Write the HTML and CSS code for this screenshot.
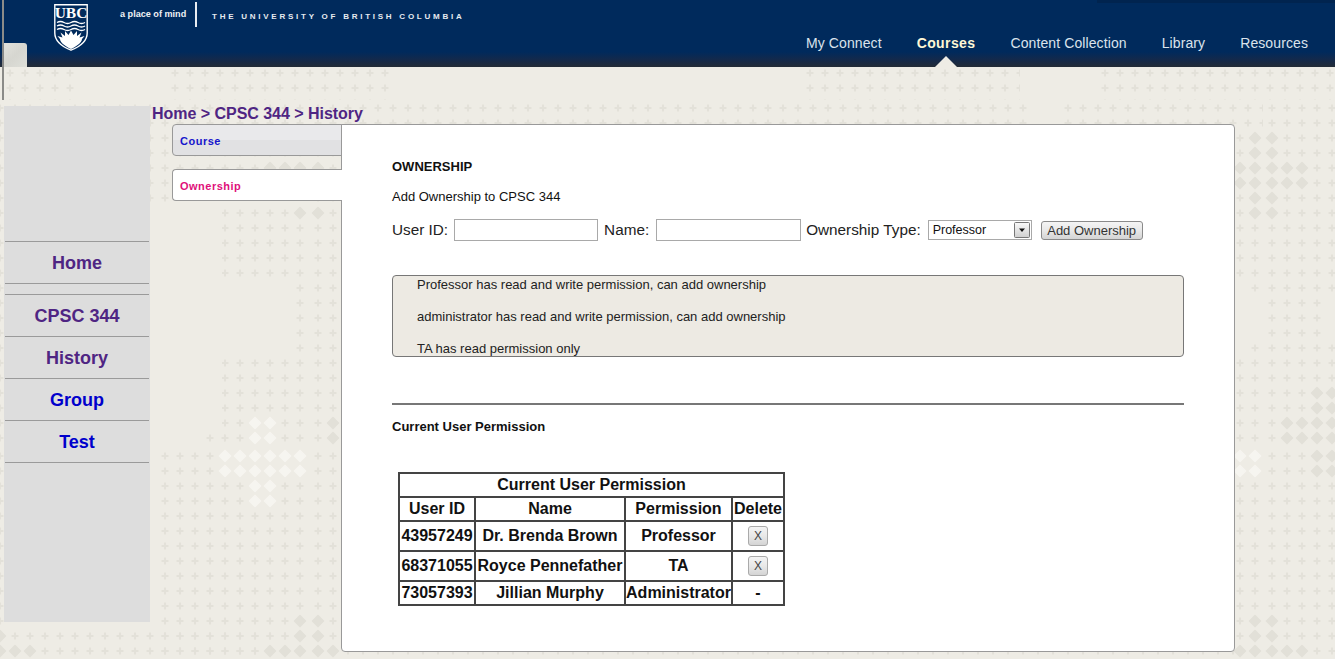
FILE: index.html
```html
<!DOCTYPE html>
<html lang="en">
<head>
<meta charset="utf-8">
<title>Ownership - CPSC 344</title>
<link rel="stylesheet" href="styles.css">
</head>
<body>
<div class="page">
  <header class="header">
    <div class="tab-handle"></div>
    <div class="top-strip"></div>
    <div class="brand">
      <svg class="crest" viewBox="0 0 34 47" width="34" height="47" aria-label="UBC">
        <path d="M.8.8H33.2V29C33.2 37 25 43 17 46.2 9 43 .8 37 .8 29Z" fill="#002a5c" stroke="#fff" stroke-width="1.4"/>
        <text x="17" y="13.8" text-anchor="middle" class="crest-text">UBC</text>
        <path d="M3 18.5q3.500-2 7 0t7 0 7 0 7 0M3 22q3.500-2 7 0t7 0 7 0 7 0M3 25.500q3.500-2 7 0t7 0 7 0 7 0" fill="none" stroke="#fff" stroke-width="1.300"/>
        <path d="M3.500 32 8.500 33.500 6.500 28.500 11 32 11 27 14.500 31 17 26.500 19.500 31 23 27 23 32 27.500 28.500 25.500 33.500 30.500 32 28 35C28 39 21 43 17 45 13 43 6 39 6 35Z" fill="#fff"/>
      </svg>
      <div class="tagline">a place of mind</div>
      <div class="divider"></div>
      <div class="uni-name">THE UNIVERSITY OF BRITISH COLUMBIA</div>
    </div>
    <nav class="topnav">
      <a class="topnav-link">My Connect</a>
      <a class="topnav-link is-active">Courses</a>
      <a class="topnav-link">Content Collection</a>
      <a class="topnav-link">Library</a>
      <a class="topnav-link">Resources</a>
    </nav>
  </header>
  <div class="edge-line"></div>
  <div class="layout">
    <aside class="sidebar">
      <a class="side-item side-home">Home</a>
      <a class="side-item">CPSC 344</a>
      <a class="side-item">History</a>
      <a class="side-item side-blue">Group</a>
      <a class="side-item side-blue">Test</a>
    </aside>
    <main class="main">
      <div class="breadcrumb">Home &gt; CPSC 344 &gt; History</div>
      <div class="workspace">
        <div class="tabs">
          <a class="tab tab-course">Course</a>
          <a class="tab tab-current">Ownership</a>
        </div>
        <section class="panel">
          <h1 class="panel-title">OWNERSHIP</h1>
          <p class="panel-sub">Add Ownership to CPSC 344</p>
          <form class="form-row">
            <label class="field-label" for="uid">User ID:</label>
            <input class="field-input" id="uid" type="text">
            <label class="field-label" for="uname">Name:</label>
            <input class="field-input" id="uname" type="text">
            <label class="field-label" for="otype">Ownership Type:</label>
            <select class="field-select" id="otype">
              <option>Professor</option>
              <option>administrator</option>
              <option>TA</option>
            </select>
            <button class="btn btn-add" type="button">Add Ownership</button>
          </form>
          <div class="info-box">
            <p class="info-line">Professor has read and write permission, can add ownership</p>
            <p class="info-line">administrator has read and write permission, can add ownership</p>
            <p class="info-line">TA has read permission only</p>
          </div>
          <hr class="rule">
          <h2 class="section-title">Current User Permission</h2>
          <table class="perm-table">
            <colgroup>
              <col class="col-id"><col class="col-name"><col class="col-perm"><col class="col-del">
            </colgroup>
            <thead>
              <tr class="row-head"><th colspan="4">Current User Permission</th></tr>
              <tr class="row-head"><th>User ID</th><th>Name</th><th>Permission</th><th>Delete</th></tr>
            </thead>
            <tbody>
              <tr class="row-tall"><td>43957249</td><td>Dr. Brenda Brown</td><td>Professor</td><td><button class="btn btn-x" type="button">X</button></td></tr>
              <tr class="row-tall"><td>68371055</td><td>Royce Pennefather</td><td>TA</td><td><button class="btn btn-x" type="button">X</button></td></tr>
              <tr class="row-head"><td>73057393</td><td>Jillian Murphy</td><td>Administrator</td><td>-</td></tr>
            </tbody>
          </table>
        </section>
      </div>
    </main>
  </div>
</div>
</body>
</html>
```
FILE: styles.css
```css
* { box-sizing: border-box; }
html, body { margin: 0; padding: 0; }
body {
  font-family: "Liberation Sans", Arial, sans-serif;
  color: #111;
  background-color: #eeece5;
  background-repeat: no-repeat;
  background-image: url("data:image/svg+xml,<svg xmlns='http://www.w3.org/2000/svg' width='1335' height='659'><defs><pattern id='c' x='-7' y='-7' width='15' height='15' patternUnits='userSpaceOnUse'><path d='M7 3.500v7M3.500 7h7' stroke='%23e3e1d9' stroke-width='2.200'/></pattern><path id='d' d='M0-5.500 5.500 0 0 5.500-5.500 0Z' stroke-width='1.500' stroke-linejoin='round'/></defs><g fill='url(%23c)'><g transform='translate(10,13)'><rect x='-7' y='52' width='75' height='35'/><rect x='158' y='52' width='227' height='35'/><rect x='1090' y='52' width='240' height='35'/></g><g transform='translate(0,13)'><rect x='805' y='52' width='215' height='35'/></g><g transform='translate(0,3)'><rect x='-8' y='100' width='180' height='105'/><rect x='-8' y='205' width='15' height='240'/><rect x='172' y='100' width='137' height='25'/><rect x='172' y='150' width='137' height='20'/><rect x='222' y='205' width='87' height='70'/><rect x='295' y='280' width='14' height='70'/><rect x='222' y='355' width='87' height='85'/><rect x='205' y='430' width='20' height='10'/></g><g transform='translate(3,3)'><rect x='306' y='100' width='720' height='25'/><rect x='1060' y='100' width='200' height='25'/><rect x='306' y='150' width='32' height='295'/></g><g transform='translate(10,3)'><rect x='1225' y='125' width='28' height='150'/><rect x='1225' y='355' width='28' height='85'/><rect x='1240' y='280' width='13' height='10'/><rect x='1240' y='340' width='13' height='10'/></g><g transform='translate(12,3)'><rect x='1251' y='100' width='84' height='190'/><rect x='1251' y='295' width='60' height='40'/><rect x='1251' y='340' width='84' height='105'/></g><g transform='translate(0,6)'><rect x='-8' y='445' width='15' height='205'/><rect x='160' y='445' width='149' height='205'/><rect x='-8' y='625' width='317' height='30'/></g><g transform='translate(3,6)'><rect x='306' y='445' width='32' height='205'/><rect x='306' y='640' width='930' height='15'/></g><g transform='translate(10,6)'><rect x='1225' y='445' width='28' height='205'/></g><g transform='translate(12,6)'><rect x='1251' y='445' width='84' height='205'/></g></g><g fill='%23e2e0d8' stroke='%23e2e0d8'><use href='%23d' x='270' y='168'/><use href='%23d' x='285' y='168'/><use href='%23d' x='300' y='168'/><use href='%23d' x='318' y='168'/><use href='%23d' x='300' y='213'/><use href='%23d' x='318' y='213'/><use href='%23d' x='333' y='423'/><use href='%23d' x='333' y='438'/><use href='%23d' x='300' y='621'/><use href='%23d' x='318' y='621'/><use href='%23d' x='300' y='636'/><use href='%23d' x='318' y='636'/><use href='%23d' x='270' y='651'/><use href='%23d' x='285' y='651'/><use href='%23d' x='300' y='651'/><use href='%23d' x='318' y='651'/><use href='%23d' x='333' y='651'/><use href='%23d' x='0' y='636'/><use href='%23d' x='0' y='651'/><use href='%23d' x='15' y='651'/><use href='%23d' x='30' y='651'/><use href='%23d' x='1255' y='138'/><use href='%23d' x='1272' y='138'/><use href='%23d' x='1255' y='153'/><use href='%23d' x='1272' y='153'/><use href='%23d' x='1240' y='168'/><use href='%23d' x='1255' y='168'/><use href='%23d' x='1272' y='168'/><use href='%23d' x='1287' y='168'/><use href='%23d' x='1302' y='168'/><use href='%23d' x='1240' y='183'/><use href='%23d' x='1255' y='183'/><use href='%23d' x='1272' y='183'/><use href='%23d' x='1287' y='183'/><use href='%23d' x='1302' y='183'/><use href='%23d' x='1255' y='198'/><use href='%23d' x='1272' y='198'/><use href='%23d' x='1255' y='213'/><use href='%23d' x='1272' y='213'/><use href='%23d' x='1317' y='393'/><use href='%23d' x='1332' y='393'/><use href='%23d' x='1317' y='408'/><use href='%23d' x='1332' y='408'/><use href='%23d' x='1287' y='423'/><use href='%23d' x='1302' y='423'/><use href='%23d' x='1317' y='423'/><use href='%23d' x='1332' y='423'/><use href='%23d' x='1287' y='438'/><use href='%23d' x='1302' y='438'/><use href='%23d' x='1317' y='438'/><use href='%23d' x='1332' y='438'/><use href='%23d' x='1317' y='456'/><use href='%23d' x='1332' y='456'/><use href='%23d' x='1317' y='471'/><use href='%23d' x='1332' y='471'/><use href='%23d' x='1255' y='621'/><use href='%23d' x='1272' y='621'/><use href='%23d' x='1255' y='636'/><use href='%23d' x='1272' y='636'/><use href='%23d' x='1240' y='651'/><use href='%23d' x='1255' y='651'/><use href='%23d' x='1272' y='651'/><use href='%23d' x='1287' y='651'/><use href='%23d' x='1302' y='651'/></g><g fill='%23f6f5f0' stroke='%23f6f5f0'><use href='%23d' x='255' y='423'/><use href='%23d' x='270' y='423'/><use href='%23d' x='255' y='438'/><use href='%23d' x='270' y='438'/><use href='%23d' x='225' y='456'/><use href='%23d' x='240' y='456'/><use href='%23d' x='255' y='456'/><use href='%23d' x='270' y='456'/><use href='%23d' x='285' y='456'/><use href='%23d' x='300' y='456'/><use href='%23d' x='225' y='471'/><use href='%23d' x='240' y='471'/><use href='%23d' x='255' y='471'/><use href='%23d' x='270' y='471'/><use href='%23d' x='285' y='471'/><use href='%23d' x='300' y='471'/><use href='%23d' x='255' y='486'/><use href='%23d' x='270' y='486'/><use href='%23d' x='255' y='501'/><use href='%23d' x='270' y='501'/><use href='%23d' x='1240' y='456'/><use href='%23d' x='1255' y='456'/><use href='%23d' x='1240' y='471'/><use href='%23d' x='1255' y='471'/></g></svg>");
}
.page {
  position: relative;
  height: 659px;
  overflow: hidden;
}

/* Header */
.header {
  position: relative;
  display: flex;
  justify-content: space-between;
  height: 67px;
  background: linear-gradient(to bottom, #002a5c 0, #002a5c 52px, #14294a 60px, #232b36 67px);
}
.tab-handle {
  position: absolute;
  left: 4px;
  top: 43px;
  width: 23px;
  height: 24px;
  background: linear-gradient(135deg, #e2e2dc 0, #d6d6d0 50%, #dedfd9 100%);
  border-radius: 0 3px 0 0;
}
.top-strip {
  position: absolute;
  right: 0;
  top: 0;
  width: 238px;
  height: 3px;
  background: #01244f;
}
.edge-line {
  position: absolute;
  left: 2px;
  top: 0;
  width: 2px;
  height: 100px;
  background: #8b8b88;
}
.brand {
  position: relative;
  height: 67px;
  display: flex;
  align-items: flex-start;
  padding: 4px 0 0 54px;
  color: #fff;
}
.crest { display: block; flex: none; }
.crest-text {
  font-family: "Liberation Serif", serif;
  font-size: 15.500px;
  font-weight: 700;
  fill: #fff;
}
.tagline {
  margin: 4px 0 0 32px;
  width: 75px;
  font-size: 9.100px;
  line-height: 12px;
  font-weight: 700;
  white-space: nowrap;
  color: #f0f2f5;
}
.divider {
  width: 2px;
  height: 25px;
  margin-top: -2px;
  background: #e8ecf1;
}
.uni-name {
  margin: 8px 0 0 15px;
  font-size: 8px;
  line-height: 10px;
  font-weight: 700;
  letter-spacing: 2.750px;
  white-space: nowrap;
  color: #e6eaf0;
}
.topnav {
  display: flex;
  gap: 35px;
  padding: 35px 27px 0 0;
}
.topnav-link {
  position: relative;
  height: 16px;
  font-size: 14px;
  line-height: 16px;
  letter-spacing: 0.1px;
  color: #dbe3ec;
  white-space: nowrap;
}
.topnav-link.is-active {
  font-weight: 700;
  letter-spacing: 0.4px;
  color: #fff8d6;
}
.topnav-link.is-active::after {
  content: "";
  position: absolute;
  left: 50%;
  top: 21px;
  margin-left: -11px;
  border-left: 11px solid transparent;
  border-right: 11px solid transparent;
  border-bottom: 11px solid #eeece5;
}

/* Layout */
.layout {
  display: flex;
  align-items: flex-start;
  padding: 37px 0 0 4px;
}
.sidebar {
  flex: none;
  width: 146px;
  height: 516px;
  margin-top: 2px;
  padding: 135px 1px 0;
  background: #dddddd;
}
.side-item {
  display: block;
  height: 42px;
  border-bottom: 1px solid #9a9a9a;
  text-align: center;
  font-size: 18px;
  line-height: 43px;
  font-weight: 700;
  color: #4f2583;
}
.side-home {
  height: 43px;
  border-top: 1px solid #9a9a9a;
  margin-bottom: 10px;
}
.side-home + .side-item {
  height: 43px;
  border-top: 1px solid #9a9a9a;
}
.side-blue { color: #0000cc; }

.main {
  flex: none;
  margin-left: 2px;
  width: 1085px;
}
.breadcrumb {
  height: 20px;
  font-size: 16px;
  line-height: 18px;
  padding-top: 1px;
  font-weight: 700;
  letter-spacing: -0.03px;
  color: #4f2583;
  white-space: nowrap;
}
.workspace {
  display: flex;
  align-items: flex-start;
  padding-left: 20px;
}
.tabs {
  position: relative;
  z-index: 1;
  flex: none;
  width: 170px;
  margin-right: -1px;
}
.tab {
  display: block;
  height: 32px;
  padding-left: 7px;
  font-size: 11px;
  line-height: 32px;
  font-weight: 700;
  letter-spacing: 0.5px;
  border: 1px solid #999;
  border-right: 0;
  border-radius: 4px 0 0 4px;
}
.tab-course {
  color: #1515cc;
  background: linear-gradient(to bottom, #e9e9eb 0, #e9e9eb 50%, #e1e1e3 50%, #e1e1e3 100%);
  border-right: 1px solid #999;
  margin-bottom: 13px;
}
.tab-current {
  color: #e0107a;
  background: #fff;
}
.panel {
  flex: none;
  width: 894px;
  height: 528px;
  padding: 34px 50px 0;
  background: #fff;
  border: 1px solid #999;
  border-radius: 0 4px 4px 4px;
}
.panel-title {
  margin: 0;
  font-size: 13px;
  line-height: 15px;
  font-weight: 700;
}
.panel-sub {
  margin: 15px 0 0;
  font-size: 13px;
  line-height: 15px;
}
.form-row {
  display: flex;
  align-items: center;
  height: 22px;
  margin-top: 15px;
}
.field-label {
  font-size: 15.300px;
  line-height: 22px;
  color: #222;
  white-space: nowrap;
}
.field-input {
  height: 22px;
  width: 144px;
  margin: 0 6px;
  padding: 0 3px;
  background: #fff;
  border: 1px solid #a9a9a9;
  border-radius: 0;
}
.field-input + .field-label + .field-input {
  width: 145px;
  margin-left: 7px;
  margin-right: 5px;
}
.field-select {
  appearance: none;
  -webkit-appearance: none;
  width: 104px;
  height: 20px;
  margin-left: 7px;
  padding: 0 0 0 4px;
  font-family: "Liberation Sans", Arial, sans-serif;
  font-size: 12.500px;
  color: #111;
  border: 1px solid #a9a9a9;
  border-radius: 0;
  background: #fff url("data:image/svg+xml,<svg xmlns='http://www.w3.org/2000/svg' width='16' height='16'><defs><linearGradient id='g' x2='0' y2='1'><stop offset='0' stop-color='%23fafafa'/><stop offset='1' stop-color='%23cfcfcf'/></linearGradient></defs><rect x='.5' y='.5' width='15' height='15' rx='1' fill='url(%23g)' stroke='%23777'/><path d='M5 6.500h6L8 10z' fill='%23111'/></svg>") no-repeat right 1px center;
}
.btn {
  font-family: "Liberation Sans", Arial, sans-serif;
  font-size: 13px;
  color: #333;
  border: 1px solid #8a8a8a;
  border-radius: 3px;
  background: linear-gradient(to bottom, #f4f4f4 0, #e8e8e8 50%, #d4d4d4 100%);
  padding: 0;
  cursor: default;
}
.btn-add {
  width: 102px;
  height: 19px;
  margin-left: 9px;
}
.info-box {
  height: 82px;
  margin-top: 34px;
  padding: 0 0 0 24px;
  overflow: hidden;
  background: #edeae3;
  border: 1px solid #777;
  border-radius: 4px;
}
.info-line {
  margin: 0;
  font-size: 13px;
  line-height: 18px;
  padding-bottom: 14px;
  color: #222;
}
.rule {
  height: 2px;
  margin: 46px 0 0;
  border: 0;
  background: #777;
}
.section-title {
  margin: 14px 0 0;
  font-size: 13px;
  line-height: 15px;
  font-weight: 700;
}
.perm-table {
  margin: 38px 0 0 6px;
  width: 387px;
  table-layout: fixed;
  border-collapse: collapse;
  font-size: 16px;
  font-weight: 700;
  text-align: center;
  color: #111;
}
.col-id { width: 76px; }
.col-name { width: 150px; }
.col-perm { width: 107px; }
.col-del { width: 52px; }
.perm-table th,
.perm-table td {
  padding: 0;
  border: 2px solid #444;
  white-space: nowrap;
}
.row-head { height: 24px; }
.row-tall { height: 30px; }
.btn-x {
  display: block;
  width: 20px;
  height: 20px;
  margin: 0 auto;
  border-color: #aaa;
  font-size: 12px;
  font-weight: 400;
  color: #444;
}
```
